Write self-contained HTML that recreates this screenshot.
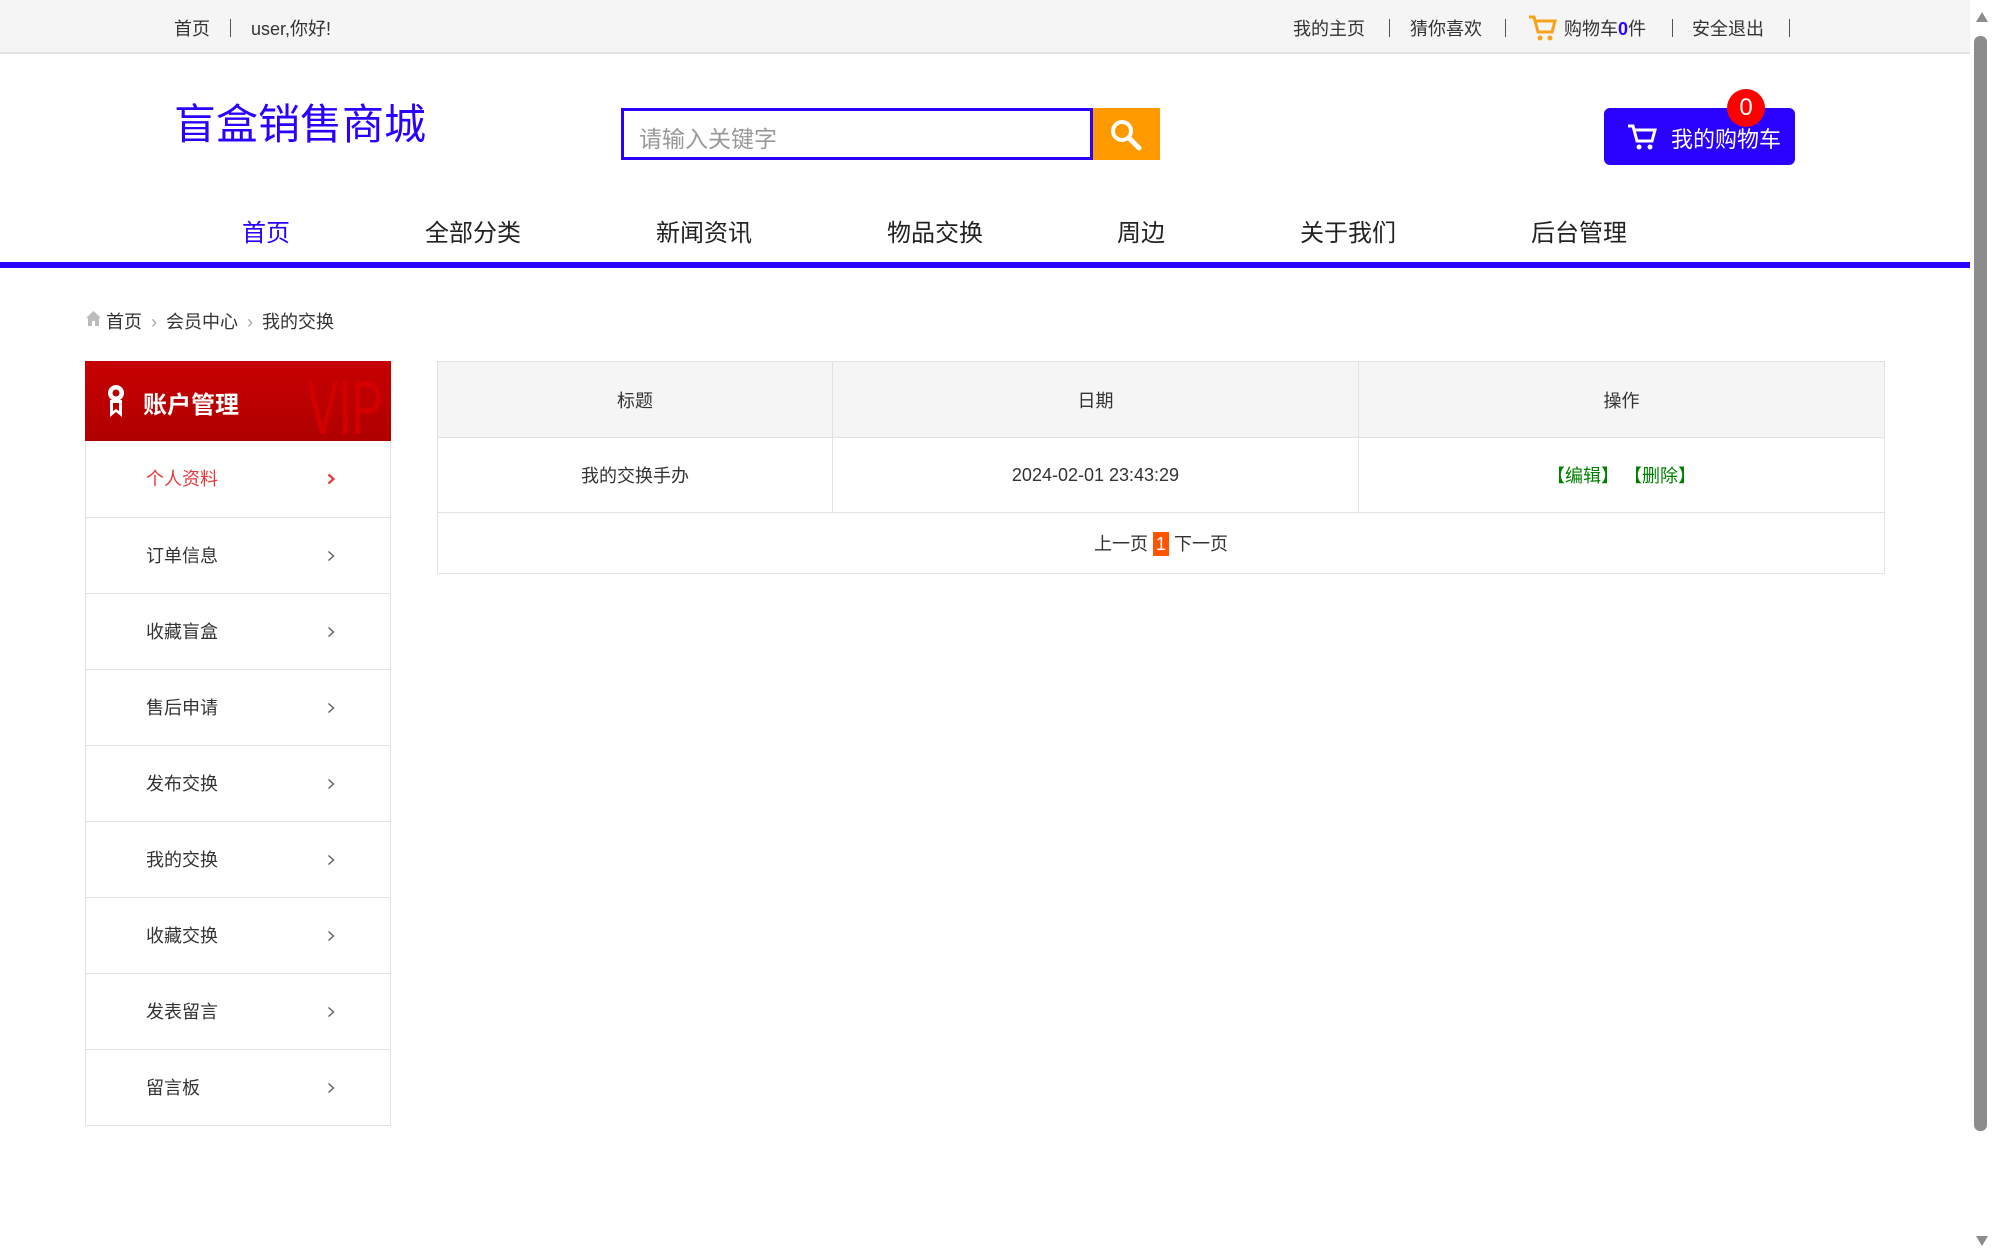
<!DOCTYPE html>
<html><head><meta charset="utf-8"><style>
*{margin:0;padding:0;box-sizing:border-box}
body{width:1992px;height:1252px;overflow:hidden;background:#fff;font-family:"Liberation Sans","Noto Sans CJK SC",sans-serif;color:#333;position:relative}
.a{position:absolute;white-space:nowrap}
.top{position:absolute;left:0;top:0;width:1970px;height:54px;background:#f5f5f5;border-bottom:2px solid #e2e2e2}
.tt{font-size:18px;color:#333;top:15px}
.sep{top:19px;width:1px;height:18px;background:#555}
.nav{font-size:24px;color:#222;top:213px;transform:translateX(-50%)}
.side{position:absolute;left:85px;top:441px;width:306px;border:1px solid #e2e2e2;border-top:none}
.side div{height:76px;border-top:1px solid #e2e2e2;font-size:18px;line-height:76px;padding-left:60px;position:relative;color:#333}
.side div:first-child{border-top:none}
.side div svg{position:absolute;left:241px;top:32px}
table{position:absolute;left:437px;top:361px;width:1448px;border-collapse:collapse;font-size:18px;color:#333}
td{border:1px solid #e2e2e2;text-align:center}
</style></head><body>
<div class="top"></div>
<div class="a tt" style="left:174px">首页</div>
<div class="a sep" style="left:230px"></div>
<div class="a tt" style="left:251px">user,你好!</div>
<div class="a tt" style="left:1293px">我的主页</div>
<div class="a sep" style="left:1389px"></div>
<div class="a tt" style="left:1410px">猜你喜欢</div>
<div class="a sep" style="left:1505px"></div>
<svg class="a" style="left:1527px;top:14px" width="30" height="28" viewBox="0 0 30 28"><path d="M2 3h5l4 15h14l3-11H9" fill="none" stroke="#f7a21b" stroke-width="3"/><circle cx="13" cy="24" r="2.5" fill="#f7a21b"/><circle cx="23" cy="24" r="2.5" fill="#f7a21b"/></svg>
<div class="a tt" style="left:1564px">购物车<b style="color:#2a00ff">0</b>件</div>
<div class="a sep" style="left:1672px"></div>
<div class="a tt" style="left:1692px">安全退出</div>
<div class="a sep" style="left:1789px"></div>

<div class="a" style="left:174px;top:91px;font-size:42px;color:#2a00ff">盲盒销售商城</div>
<div class="a" style="left:621px;top:108px;width:472px;height:52px;border:3px solid #2a00ff"></div>
<div class="a" style="left:639px;top:120px;font-size:23px;color:#999">请输入关键字</div>
<div class="a" style="left:1093px;top:108px;width:67px;height:52px;background:#ff9900"></div>
<svg class="a" style="left:1108px;top:117px" width="36" height="36" viewBox="0 0 36 36"><circle cx="14" cy="14" r="9" fill="none" stroke="#fff" stroke-width="4"/><path d="M21 21l10 10" stroke="#fff" stroke-width="5" stroke-linecap="round"/></svg>
<div class="a" style="left:1604px;top:108px;width:191px;height:57px;background:#2a00ff;border-radius:6px"></div>
<svg class="a" style="left:1626px;top:123px" width="32" height="28" viewBox="0 0 32 28"><path d="M2 3h5l4 15h15l3-11H9" fill="none" stroke="#fff" stroke-width="3"/><circle cx="13" cy="24" r="2.5" fill="#fff"/><circle cx="24" cy="24" r="2.5" fill="#fff"/></svg>
<div class="a" style="left:1671px;top:122px;font-size:22px;color:#fff">我的购物车</div>
<div class="a" style="left:1727px;top:89px;width:38px;height:38px;border-radius:50%;background:#f00;color:#fff;font-size:24px;text-align:center;line-height:38px">0</div>

<div class="a nav" style="left:266px;color:#2a00ff">首页</div>
<div class="a nav" style="left:473px">全部分类</div>
<div class="a nav" style="left:704px">新闻资讯</div>
<div class="a nav" style="left:935px">物品交换</div>
<div class="a nav" style="left:1141px">周边</div>
<div class="a nav" style="left:1348px">关于我们</div>
<div class="a nav" style="left:1579px">后台管理</div>
<div class="a" style="left:0;top:262px;width:1970px;height:6px;background:#2a00ff"></div>

<svg class="a" style="left:85px;top:310px" width="17" height="16" viewBox="0 0 17 16"><path d="M8.5 1L1 8h2v8h4v-5h3v5h4V8h2z" fill="#bbb"/></svg>
<div class="a" style="left:106px;top:308px;font-size:18px;color:#333">首页 <span style="color:#aaa;margin:0 4px">›</span> 会员中心 <span style="color:#aaa;margin:0 4px">›</span> 我的交换</div>

<div class="a" style="left:85px;top:361px;width:306px;height:80px;background:linear-gradient(#c70000,#b00000);overflow:hidden">
<div class="a" style="left:222px;top:4px;font-size:76px;color:#d40000;transform:scaleX(.62);transform-origin:left">VIP</div>
<svg class="a" style="left:20px;top:22px" width="22" height="36" viewBox="0 0 22 36"><circle cx="11" cy="10" r="8" fill="#fff"/><circle cx="11" cy="10" r="3.5" fill="#b80000"/><path d="M5 17v17l6-5 6 5V17z" fill="#fff"/><path d="M8 20v8l3-2 3 2v-8z" fill="#b80000"/></svg>
<div class="a" style="left:58px;top:24px;font-size:24px;color:#fff;font-weight:bold">账户管理</div>
</div>
<div class="side">
<div style="color:#e4393c">个人资料<svg width="8" height="12" viewBox="0 0 8 12"><path d="M1.5 1.5l5 4.5-5 4.5" fill="none" stroke="#e4393c" stroke-width="2.2"/></svg></div>
<div>订单信息<svg width="8" height="12" viewBox="0 0 8 12"><path d="M1.5 1.5l5 4.5-5 4.5" fill="none" stroke="#666" stroke-width="1.5"/></svg></div>
<div>收藏盲盒<svg width="8" height="12" viewBox="0 0 8 12"><path d="M1.5 1.5l5 4.5-5 4.5" fill="none" stroke="#666" stroke-width="1.5"/></svg></div>
<div>售后申请<svg width="8" height="12" viewBox="0 0 8 12"><path d="M1.5 1.5l5 4.5-5 4.5" fill="none" stroke="#666" stroke-width="1.5"/></svg></div>
<div>发布交换<svg width="8" height="12" viewBox="0 0 8 12"><path d="M1.5 1.5l5 4.5-5 4.5" fill="none" stroke="#666" stroke-width="1.5"/></svg></div>
<div>我的交换<svg width="8" height="12" viewBox="0 0 8 12"><path d="M1.5 1.5l5 4.5-5 4.5" fill="none" stroke="#666" stroke-width="1.5"/></svg></div>
<div>收藏交换<svg width="8" height="12" viewBox="0 0 8 12"><path d="M1.5 1.5l5 4.5-5 4.5" fill="none" stroke="#666" stroke-width="1.5"/></svg></div>
<div>发表留言<svg width="8" height="12" viewBox="0 0 8 12"><path d="M1.5 1.5l5 4.5-5 4.5" fill="none" stroke="#666" stroke-width="1.5"/></svg></div>
<div>留言板<svg width="8" height="12" viewBox="0 0 8 12"><path d="M1.5 1.5l5 4.5-5 4.5" fill="none" stroke="#666" stroke-width="1.5"/></svg></div>
</div>

<table>
<tr style="height:76px;background:#f5f5f5"><td style="width:395px">标题</td><td style="width:526px">日期</td><td>操作</td></tr>
<tr style="height:75px"><td>我的交换手办</td><td>2024-02-01 23:43:29</td><td style="color:#008000">【编辑】 【删除】</td></tr>
<tr style="height:61px"><td colspan="3">上一页 <span style="background:#ff5500;color:#fff;padding:2px 3px">1</span> 下一页</td></tr>
</table>

<div class="a" style="left:1970px;top:0;width:22px;height:1252px;background:#fff"></div>
<div class="a" style="left:1976px;top:12px;width:0;height:0;border-left:6px solid transparent;border-right:6px solid transparent;border-bottom:10px solid #8c8c8c"></div>
<div class="a" style="left:1974px;top:36px;width:13px;height:1095px;background:#8c8c8c;border-radius:6px"></div>
<div class="a" style="left:1976px;top:1236px;width:0;height:0;border-left:6px solid transparent;border-right:6px solid transparent;border-top:10px solid #8c8c8c"></div>
</body></html>
